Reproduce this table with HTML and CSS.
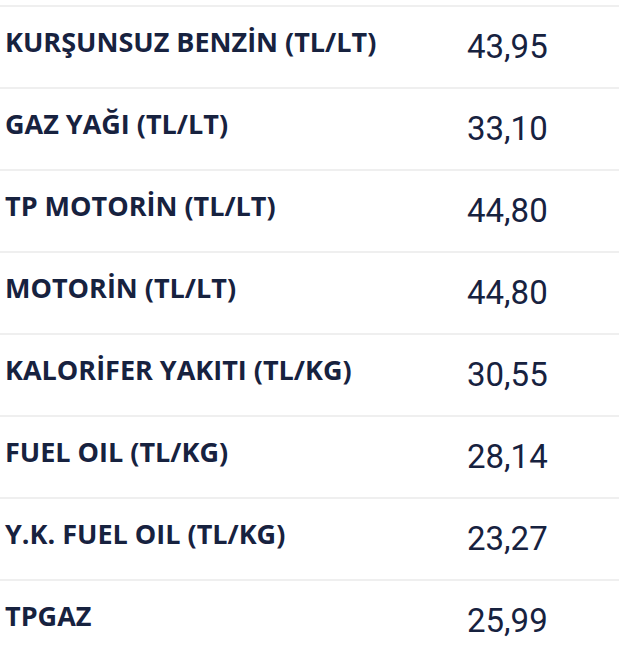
FILE: index.html
```html
<!DOCTYPE html>
<html lang="tr">
<head>
<meta charset="utf-8">
<link rel="stylesheet" href="styles.css">
</head>
<body>
<table class="prices">
<tbody>
<tr><td class="name">KURŞUNSUZ BENZİN (TL/LT)</td><td class="val">43,95</td></tr>
<tr><td class="name">GAZ YAĞI (TL/LT)</td><td class="val">33,10</td></tr>
<tr><td class="name">TP MOTORİN (TL/LT)</td><td class="val">44,80</td></tr>
<tr><td class="name">MOTORİN (TL/LT)</td><td class="val">44,80</td></tr>
<tr><td class="name">KALORİFER YAKITI (TL/KG)</td><td class="val">30,55</td></tr>
<tr><td class="name">FUEL OIL (TL/KG)</td><td class="val">28,14</td></tr>
<tr><td class="name">Y.K. FUEL OIL (TL/KG)</td><td class="val">23,27</td></tr>
<tr><td class="name">TPGAZ</td><td class="val">25,99</td></tr>
</tbody>
</table>
</body>
</html>
```
FILE: styles.css
```css
html, body {
  margin: 0;
  padding: 0;
  background: #ffffff;
}
.prices {
  width: 100%;
  margin-top: 5px;
  border-collapse: collapse;
  border-top: 2px solid #efefef;
  color: #17223f;
}
.prices tr {
  border-bottom: 2px solid #efefef;
}
.prices td {
  height: 82px;
  box-sizing: border-box;
  vertical-align: middle;
}
.name {
  padding: 0 0 12px 5px;
  font-family: "Open Sans", sans-serif;
  font-weight: 700;
  font-size: 27px;
  width: 467px;
  box-sizing: border-box;
}
.val {
  padding: 0 0 2px 0;
  font-family: Roboto, sans-serif;
  font-weight: 400;
  font-size: 33px;
}
```
